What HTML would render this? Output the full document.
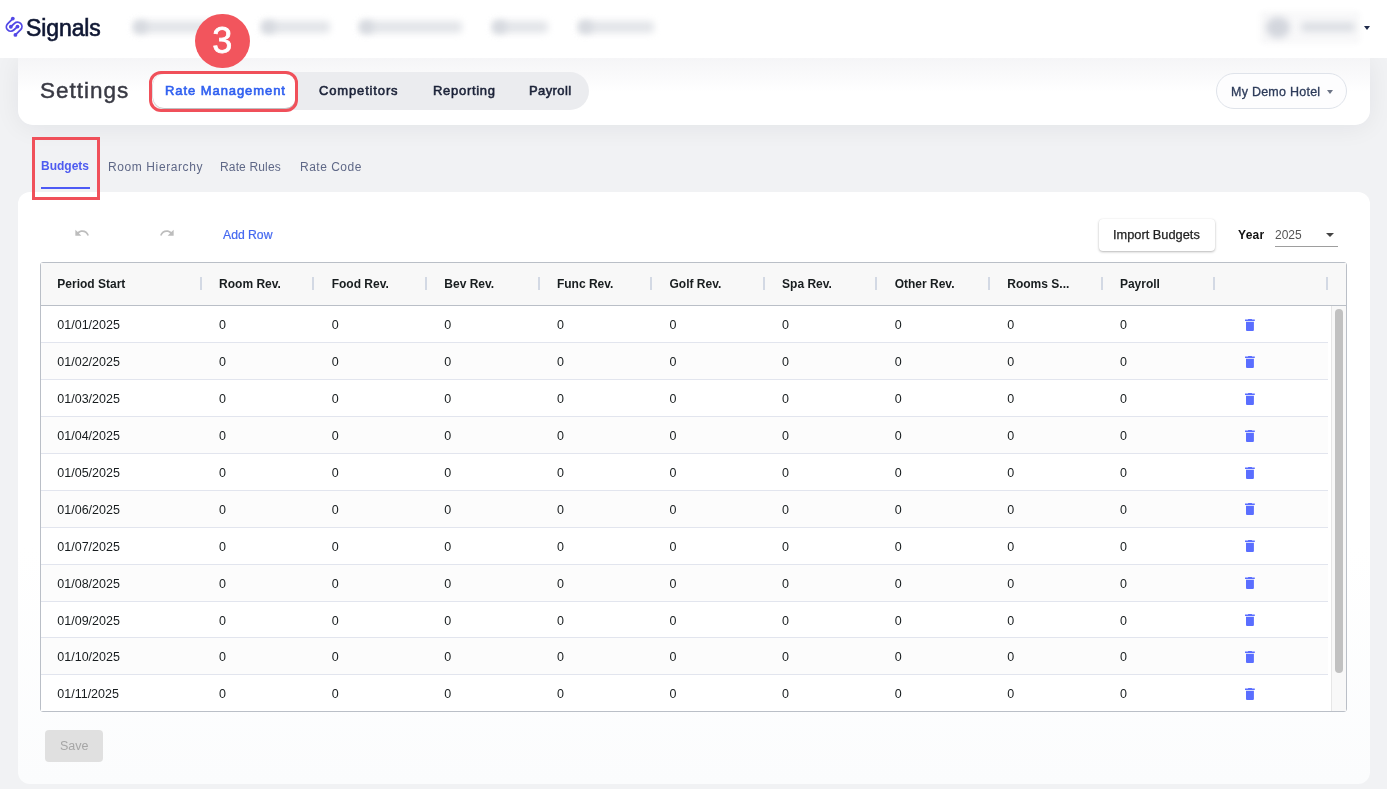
<!DOCTYPE html>
<html><head><meta charset="utf-8">
<style>
*{box-sizing:border-box;margin:0;padding:0}
html,body{width:1387px;height:789px;overflow:hidden}
body{position:relative;background:#f1f2f4;will-change:transform;font-family:"Liberation Sans",sans-serif;}
.abs{position:absolute}
#nav{left:0;top:0;width:1387px;height:58px;background:#fff;z-index:0}
.blur{position:absolute;background:#d3d6dc;filter:blur(3.5px);border-radius:4px}
#bgshade{display:none}
#card1{left:18px;top:58px;width:1352px;height:67px;background:linear-gradient(#f5f5f7 0px,#fafafb 18px,#fff 34px);border-radius:0 0 15px 15px;box-shadow:0 2px 26px rgba(20,25,50,0.065)}
#title{left:40px;top:78px;font-size:22.5px;line-height:26px;color:#393a44;letter-spacing:1px;-webkit-text-stroke:0.45px #393a44}
#tabs{left:151px;top:72px;width:438px;height:38px;background:#ebecef;border-radius:19px}
.tab{position:absolute;top:71.8px;height:38px;line-height:38px;font-size:13px;color:#1b2238;-webkit-text-stroke:0.55px #1b2238}
#tabact{left:153px;top:74px;width:143px;height:34px;background:#fff;border-radius:11px;box-shadow:0 1px 1.5px rgba(0,0,0,.22),0 0 1px rgba(0,0,0,.15)}
#hotel{left:1216px;top:73px;width:131px;height:36px;border:1px solid #dfe3ea;border-radius:18px;background:#fdfdfe}
#card2{left:18px;top:192px;width:1352px;height:592px;background:linear-gradient(#fff 60%,#fbfcfd);border-radius:12px}
.sub{position:absolute;top:159px;font-size:12px;line-height:16px;color:#5f6887}
.btntext{position:absolute;font-size:12.5px;line-height:16px}
#table{left:40px;top:262px;width:1307px;height:450px;border:1px solid #babfc7;border-radius:3px;background:#fff;overflow:hidden}
#thead{left:41px;top:263px;width:1305px;height:43px;background:#f8f8f8;border-bottom:1px solid #babfc7}
.sep{position:absolute;top:277px;width:2px;height:13px;background:#d3d9e4}
.hd{position:absolute;top:276px;font-size:12px;line-height:16px;font-weight:bold;color:#181d1f}
.row{position:absolute;left:41px;width:1287px;height:37px;border-top:1px solid #e2e5ee;background:#fff}
.row.odd{background:#fcfcfc}
.row.first{border-top:none;top:306px!important;height:36px}
.cell{position:absolute;font-size:12.5px;line-height:37px;height:37px;color:#181d1f}
.trash{position:absolute;left:1245px;width:10px;height:13px}
#vscroll{left:1331px;top:306px;width:15px;height:405px;background:#f8f8f8;border-left:1px solid #e6e6e6}
#thumb{left:1335px;top:309px;width:8px;height:364px;background:#c1c1c1;border-radius:4px}
</style></head>
<body>
<div id="bgshade" class="abs"></div>
<div id="card1" class="abs"></div>
<div id="nav" class="abs"></div>
<!-- logo -->
<svg class="abs" style="left:2px;top:12px" width="26" height="28" viewBox="0 0 26 28">
  <g fill="none" stroke="#5248e6" stroke-width="1.8" stroke-linecap="round">
    <path d="M10.80 6.56 L5.59 11.79 A4.4 4.4 0 0 0 11.81 18.01 L15.50 14.60"/>
    <path d="M13.40 22.97 L18.71 17.61 A4.4 4.4 0 0 0 12.49 11.39 L8.84 14.77"/>
  </g>
  <g fill="#5248e6">
  <circle cx="10.8" cy="6.56" r="1.9"/><circle cx="15.5" cy="14.6" r="1.9"/>
  <circle cx="13.4" cy="22.97" r="1.9"/><circle cx="8.84" cy="14.77" r="1.9"/>
  </g>
</svg>
<div class="abs" style="left:26px;top:14px;font-size:23px;line-height:28px;color:#0f1733;letter-spacing:-0.1px;-webkit-text-stroke:0.6px #0f1733">Signals</div>
<!-- blurred nav -->
<div class="blur" style="left:134px;top:21px;width:96px;height:12px;background:#e3e5e9"></div>
<div class="blur" style="left:134px;top:21px;width:13px;height:12px;background:#d5d8de"></div>
<div class="blur" style="left:262px;top:21px;width:68px;height:12px;background:#e3e5e9"></div>
<div class="blur" style="left:262px;top:21px;width:13px;height:12px;background:#d5d8de"></div>
<div class="blur" style="left:360px;top:21px;width:102px;height:12px;background:#e3e5e9"></div>
<div class="blur" style="left:360px;top:21px;width:13px;height:12px;background:#d5d8de"></div>
<div class="blur" style="left:493px;top:21px;width:55px;height:12px;background:#e3e5e9"></div>
<div class="blur" style="left:493px;top:21px;width:13px;height:12px;background:#d5d8de"></div>
<div class="blur" style="left:579px;top:21px;width:75px;height:12px;background:#e3e5e9"></div>
<div class="blur" style="left:579px;top:21px;width:13px;height:12px;background:#d5d8de"></div>
<div class="blur" style="left:1260px;top:11px;width:100px;height:33px;background:#f9f9fa;filter:blur(2px)"></div>
<div class="blur" style="left:1266px;top:17px;width:24px;height:21px;border-radius:50%;background:#d3d6dd;filter:blur(3.5px)"></div>
<div class="blur" style="left:1301px;top:22px;width:54px;height:10px;background:#dcdfe4;filter:blur(3.5px)"></div>
<div class="abs" style="left:1364px;top:26px;width:0;height:0;border-left:3.5px solid transparent;border-right:3.5px solid transparent;border-top:4.5px solid #1f2a4a"></div>

<div id="title" class="abs">Settings</div>
<div id="tabs" class="abs"></div>
<div id="tabact" class="abs"></div>
<div class="tab" style="left:165px;color:#2f5ff0;-webkit-text-stroke:0.6px #2f5ff0;letter-spacing:0.93px">Rate Management</div>
<div class="tab" style="left:319px;letter-spacing:0.85px">Competitors</div>
<div class="tab" style="left:433px;letter-spacing:0.7px">Reporting</div>
<div class="tab" style="left:529px;letter-spacing:0.4px">Payroll</div>
<div id="hotel" class="abs"></div>
<div class="abs" style="left:1231px;top:83.5px;font-size:12.5px;line-height:16px;color:#2d3b5a;letter-spacing:0.25px;-webkit-text-stroke:0.3px #2d3b5a">My Demo Hotel</div>
<div class="abs" style="left:1327px;top:90px;width:0;height:0;border-left:3.5px solid transparent;border-right:3.5px solid transparent;border-top:4px solid #6b7385"></div>

<div id="card2" class="abs"></div>
<div class="sub" style="left:41px;color:#4e5bf0;font-weight:bold;top:158px">Budgets</div>
<div class="abs" style="left:41px;top:187px;width:49px;height:2px;background:#4d5af5"></div>
<div class="sub" style="left:108px;letter-spacing:0.6px">Room Hierarchy</div>
<div class="sub" style="left:220px;letter-spacing:0.15px">Rate Rules</div>
<div class="sub" style="left:300px;letter-spacing:0.5px">Rate Code</div>

<!-- toolbar -->
<svg class="abs" style="left:74px;top:225px" width="16" height="16" viewBox="0 0 24 24"><path fill="#bdbdbd" d="M12.5 8c-2.65 0-5.05.99-6.9 2.6L2 7v9h9l-3.62-3.62c1.39-1.16 3.16-1.88 5.12-1.880 3.54 0 6.55 2.31 7.6 5.5l2.37-.78C21.08 11.03 17.15 8 12.5 8z"/></svg>
<svg class="abs" style="left:159px;top:225px" width="16" height="16" viewBox="0 0 24 24"><path fill="#bdbdbd" d="M18.4 10.6C16.55 8.99 14.150 8 11.5 8c-4.65 0-8.58 3.03-9.96 7.22L3.9 16c1.05-3.19 4.05-5.5 7.6-5.5 1.95 0 3.73.72 5.12 1.88L13 16h9V7l-3.6 3.6z"/></svg>
<div class="btntext" style="left:223px;top:227px;color:#4468f0;font-size:12.2px;-webkit-text-stroke:0.2px #4468f0">Add Row</div>
<div class="abs" style="left:1099px;top:219px;width:116px;height:32px;background:#fff;border-radius:4px;box-shadow:0 1px 2.5px rgba(0,0,0,.28),0 0 1px rgba(0,0,0,.08)"></div>
<div class="btntext" style="left:1113px;top:227px;color:#222;font-size:12.8px;-webkit-text-stroke:0.25px #222">Import Budgets</div>
<div class="abs" style="left:1238px;top:227px;font-size:12px;line-height:16px;font-weight:bold;color:#111;letter-spacing:0.3px">Year</div>
<div class="abs" style="left:1275px;top:227px;font-size:12px;line-height:16px;color:#555">2025</div>
<div class="abs" style="left:1326px;top:233px;width:0;height:0;border-left:4.5px solid transparent;border-right:4.5px solid transparent;border-top:4.5px solid #444"></div>
<div class="abs" style="left:1275px;top:246px;width:63px;height:1px;background:#9e9e9e"></div>

<!-- table -->
<div id="table" class="abs"></div>
<div id="thead" class="abs"></div>
<div class="sep" style="left:199.8px"></div>
<div class="sep" style="left:312.4px"></div>
<div class="sep" style="left:425.0px"></div>
<div class="sep" style="left:537.6px"></div>
<div class="sep" style="left:650.2px"></div>
<div class="sep" style="left:762.8px"></div>
<div class="sep" style="left:875.4px"></div>
<div class="sep" style="left:988.0px"></div>
<div class="sep" style="left:1100.6px"></div>
<div class="sep" style="left:1213.2px"></div>
<div class="sep" style="left:1325.8px"></div>
<div class="hd" style="left:57.3px">Period Start</div>
<div class="hd" style="left:219.1px">Room Rev.</div>
<div class="hd" style="left:331.7px">Food Rev.</div>
<div class="hd" style="left:444.3px">Bev Rev.</div>
<div class="hd" style="left:556.9px">Func Rev.</div>
<div class="hd" style="left:669.5px">Golf Rev.</div>
<div class="hd" style="left:782.1px">Spa Rev.</div>
<div class="hd" style="left:894.7px">Other Rev.</div>
<div class="hd" style="left:1007.3px">Rooms S...</div>
<div class="hd" style="left:1119.9px">Payroll</div>
<div class="row first" style="top:305.3px"></div>
<div class="cell" style="left:57.3px;top:307.3px">01/01/2025</div>
<div class="cell" style="left:219.1px;top:307.3px">0</div>
<div class="cell" style="left:331.7px;top:307.3px">0</div>
<div class="cell" style="left:444.3px;top:307.3px">0</div>
<div class="cell" style="left:556.9px;top:307.3px">0</div>
<div class="cell" style="left:669.5px;top:307.3px">0</div>
<div class="cell" style="left:782.1px;top:307.3px">0</div>
<div class="cell" style="left:894.7px;top:307.3px">0</div>
<div class="cell" style="left:1007.3px;top:307.3px">0</div>
<div class="cell" style="left:1119.9px;top:307.3px">0</div>
<svg class="trash" style="top:318.9px" viewBox="0 0 10 13"><path d="M3.1 0h3.8v0.8H3.1z M0 0.4h9.8v1.5H0z M1 2.7h7.9v8.3a1 1 0 0 1-1 1H2a1 1 0 0 1-1-1z" fill="#5a6eff"/></svg>
<div class="row odd" style="top:342.2px"></div>
<div class="cell" style="left:57.3px;top:344.2px">01/02/2025</div>
<div class="cell" style="left:219.1px;top:344.2px">0</div>
<div class="cell" style="left:331.7px;top:344.2px">0</div>
<div class="cell" style="left:444.3px;top:344.2px">0</div>
<div class="cell" style="left:556.9px;top:344.2px">0</div>
<div class="cell" style="left:669.5px;top:344.2px">0</div>
<div class="cell" style="left:782.1px;top:344.2px">0</div>
<div class="cell" style="left:894.7px;top:344.2px">0</div>
<div class="cell" style="left:1007.3px;top:344.2px">0</div>
<div class="cell" style="left:1119.9px;top:344.2px">0</div>
<svg class="trash" style="top:355.8px" viewBox="0 0 10 13"><path d="M3.1 0h3.8v0.8H3.1z M0 0.4h9.8v1.5H0z M1 2.7h7.9v8.3a1 1 0 0 1-1 1H2a1 1 0 0 1-1-1z" fill="#5a6eff"/></svg>
<div class="row" style="top:379.1px"></div>
<div class="cell" style="left:57.3px;top:381.1px">01/03/2025</div>
<div class="cell" style="left:219.1px;top:381.1px">0</div>
<div class="cell" style="left:331.7px;top:381.1px">0</div>
<div class="cell" style="left:444.3px;top:381.1px">0</div>
<div class="cell" style="left:556.9px;top:381.1px">0</div>
<div class="cell" style="left:669.5px;top:381.1px">0</div>
<div class="cell" style="left:782.1px;top:381.1px">0</div>
<div class="cell" style="left:894.7px;top:381.1px">0</div>
<div class="cell" style="left:1007.3px;top:381.1px">0</div>
<div class="cell" style="left:1119.9px;top:381.1px">0</div>
<svg class="trash" style="top:392.7px" viewBox="0 0 10 13"><path d="M3.1 0h3.8v0.8H3.1z M0 0.4h9.8v1.5H0z M1 2.7h7.9v8.3a1 1 0 0 1-1 1H2a1 1 0 0 1-1-1z" fill="#5a6eff"/></svg>
<div class="row odd" style="top:416.0px"></div>
<div class="cell" style="left:57.3px;top:418.0px">01/04/2025</div>
<div class="cell" style="left:219.1px;top:418.0px">0</div>
<div class="cell" style="left:331.7px;top:418.0px">0</div>
<div class="cell" style="left:444.3px;top:418.0px">0</div>
<div class="cell" style="left:556.9px;top:418.0px">0</div>
<div class="cell" style="left:669.5px;top:418.0px">0</div>
<div class="cell" style="left:782.1px;top:418.0px">0</div>
<div class="cell" style="left:894.7px;top:418.0px">0</div>
<div class="cell" style="left:1007.3px;top:418.0px">0</div>
<div class="cell" style="left:1119.9px;top:418.0px">0</div>
<svg class="trash" style="top:429.6px" viewBox="0 0 10 13"><path d="M3.1 0h3.8v0.8H3.1z M0 0.4h9.8v1.5H0z M1 2.7h7.9v8.3a1 1 0 0 1-1 1H2a1 1 0 0 1-1-1z" fill="#5a6eff"/></svg>
<div class="row" style="top:452.9px"></div>
<div class="cell" style="left:57.3px;top:454.9px">01/05/2025</div>
<div class="cell" style="left:219.1px;top:454.9px">0</div>
<div class="cell" style="left:331.7px;top:454.9px">0</div>
<div class="cell" style="left:444.3px;top:454.9px">0</div>
<div class="cell" style="left:556.9px;top:454.9px">0</div>
<div class="cell" style="left:669.5px;top:454.9px">0</div>
<div class="cell" style="left:782.1px;top:454.9px">0</div>
<div class="cell" style="left:894.7px;top:454.9px">0</div>
<div class="cell" style="left:1007.3px;top:454.9px">0</div>
<div class="cell" style="left:1119.9px;top:454.9px">0</div>
<svg class="trash" style="top:466.5px" viewBox="0 0 10 13"><path d="M3.1 0h3.8v0.8H3.1z M0 0.4h9.8v1.5H0z M1 2.7h7.9v8.3a1 1 0 0 1-1 1H2a1 1 0 0 1-1-1z" fill="#5a6eff"/></svg>
<div class="row odd" style="top:489.8px"></div>
<div class="cell" style="left:57.3px;top:491.8px">01/06/2025</div>
<div class="cell" style="left:219.1px;top:491.8px">0</div>
<div class="cell" style="left:331.7px;top:491.8px">0</div>
<div class="cell" style="left:444.3px;top:491.8px">0</div>
<div class="cell" style="left:556.9px;top:491.8px">0</div>
<div class="cell" style="left:669.5px;top:491.8px">0</div>
<div class="cell" style="left:782.1px;top:491.8px">0</div>
<div class="cell" style="left:894.7px;top:491.8px">0</div>
<div class="cell" style="left:1007.3px;top:491.8px">0</div>
<div class="cell" style="left:1119.9px;top:491.8px">0</div>
<svg class="trash" style="top:503.4px" viewBox="0 0 10 13"><path d="M3.1 0h3.8v0.8H3.1z M0 0.4h9.8v1.5H0z M1 2.7h7.9v8.3a1 1 0 0 1-1 1H2a1 1 0 0 1-1-1z" fill="#5a6eff"/></svg>
<div class="row" style="top:526.7px"></div>
<div class="cell" style="left:57.3px;top:528.7px">01/07/2025</div>
<div class="cell" style="left:219.1px;top:528.7px">0</div>
<div class="cell" style="left:331.7px;top:528.7px">0</div>
<div class="cell" style="left:444.3px;top:528.7px">0</div>
<div class="cell" style="left:556.9px;top:528.7px">0</div>
<div class="cell" style="left:669.5px;top:528.7px">0</div>
<div class="cell" style="left:782.1px;top:528.7px">0</div>
<div class="cell" style="left:894.7px;top:528.7px">0</div>
<div class="cell" style="left:1007.3px;top:528.7px">0</div>
<div class="cell" style="left:1119.9px;top:528.7px">0</div>
<svg class="trash" style="top:540.3px" viewBox="0 0 10 13"><path d="M3.1 0h3.8v0.8H3.1z M0 0.4h9.8v1.5H0z M1 2.7h7.9v8.3a1 1 0 0 1-1 1H2a1 1 0 0 1-1-1z" fill="#5a6eff"/></svg>
<div class="row odd" style="top:563.6px"></div>
<div class="cell" style="left:57.3px;top:565.6px">01/08/2025</div>
<div class="cell" style="left:219.1px;top:565.6px">0</div>
<div class="cell" style="left:331.7px;top:565.6px">0</div>
<div class="cell" style="left:444.3px;top:565.6px">0</div>
<div class="cell" style="left:556.9px;top:565.6px">0</div>
<div class="cell" style="left:669.5px;top:565.6px">0</div>
<div class="cell" style="left:782.1px;top:565.6px">0</div>
<div class="cell" style="left:894.7px;top:565.6px">0</div>
<div class="cell" style="left:1007.3px;top:565.6px">0</div>
<div class="cell" style="left:1119.9px;top:565.6px">0</div>
<svg class="trash" style="top:577.2px" viewBox="0 0 10 13"><path d="M3.1 0h3.8v0.8H3.1z M0 0.4h9.8v1.5H0z M1 2.7h7.9v8.3a1 1 0 0 1-1 1H2a1 1 0 0 1-1-1z" fill="#5a6eff"/></svg>
<div class="row" style="top:600.5px"></div>
<div class="cell" style="left:57.3px;top:602.5px">01/09/2025</div>
<div class="cell" style="left:219.1px;top:602.5px">0</div>
<div class="cell" style="left:331.7px;top:602.5px">0</div>
<div class="cell" style="left:444.3px;top:602.5px">0</div>
<div class="cell" style="left:556.9px;top:602.5px">0</div>
<div class="cell" style="left:669.5px;top:602.5px">0</div>
<div class="cell" style="left:782.1px;top:602.5px">0</div>
<div class="cell" style="left:894.7px;top:602.5px">0</div>
<div class="cell" style="left:1007.3px;top:602.5px">0</div>
<div class="cell" style="left:1119.9px;top:602.5px">0</div>
<svg class="trash" style="top:614.1px" viewBox="0 0 10 13"><path d="M3.1 0h3.8v0.8H3.1z M0 0.4h9.8v1.5H0z M1 2.7h7.9v8.3a1 1 0 0 1-1 1H2a1 1 0 0 1-1-1z" fill="#5a6eff"/></svg>
<div class="row odd" style="top:637.4px"></div>
<div class="cell" style="left:57.3px;top:639.4px">01/10/2025</div>
<div class="cell" style="left:219.1px;top:639.4px">0</div>
<div class="cell" style="left:331.7px;top:639.4px">0</div>
<div class="cell" style="left:444.3px;top:639.4px">0</div>
<div class="cell" style="left:556.9px;top:639.4px">0</div>
<div class="cell" style="left:669.5px;top:639.4px">0</div>
<div class="cell" style="left:782.1px;top:639.4px">0</div>
<div class="cell" style="left:894.7px;top:639.4px">0</div>
<div class="cell" style="left:1007.3px;top:639.4px">0</div>
<div class="cell" style="left:1119.9px;top:639.4px">0</div>
<svg class="trash" style="top:651.0px" viewBox="0 0 10 13"><path d="M3.1 0h3.8v0.8H3.1z M0 0.4h9.8v1.5H0z M1 2.7h7.9v8.3a1 1 0 0 1-1 1H2a1 1 0 0 1-1-1z" fill="#5a6eff"/></svg>
<div class="row" style="top:674.3px"></div>
<div class="cell" style="left:57.3px;top:676.3px">01/11/2025</div>
<div class="cell" style="left:219.1px;top:676.3px">0</div>
<div class="cell" style="left:331.7px;top:676.3px">0</div>
<div class="cell" style="left:444.3px;top:676.3px">0</div>
<div class="cell" style="left:556.9px;top:676.3px">0</div>
<div class="cell" style="left:669.5px;top:676.3px">0</div>
<div class="cell" style="left:782.1px;top:676.3px">0</div>
<div class="cell" style="left:894.7px;top:676.3px">0</div>
<div class="cell" style="left:1007.3px;top:676.3px">0</div>
<div class="cell" style="left:1119.9px;top:676.3px">0</div>
<svg class="trash" style="top:687.9px" viewBox="0 0 10 13"><path d="M3.1 0h3.8v0.8H3.1z M0 0.4h9.8v1.5H0z M1 2.7h7.9v8.3a1 1 0 0 1-1 1H2a1 1 0 0 1-1-1z" fill="#5a6eff"/></svg>
<div id="vscroll" class="abs"></div>
<div id="thumb" class="abs"></div>

<div class="abs" style="left:45px;top:730px;width:58px;height:32px;background:#e0e0e0;border-radius:4px"></div>
<div class="btntext" style="left:60px;top:738px;color:#a6a6a6">Save</div>

<!-- annotations -->
<div class="abs" style="left:149px;top:71px;width:149px;height:41px;border:3px solid #f0505a;border-radius:12px"></div>
<div class="abs" style="left:32px;top:137px;width:68px;height:63px;border:3px solid #f0505a"></div>
<div class="abs" style="left:195px;top:13.5px;width:54.5px;height:54.5px;border-radius:50%;background:#f2555d;color:#fff;font-size:36px;text-align:center;line-height:54px;-webkit-text-stroke:0.8px #fff">3</div>
</body></html>
